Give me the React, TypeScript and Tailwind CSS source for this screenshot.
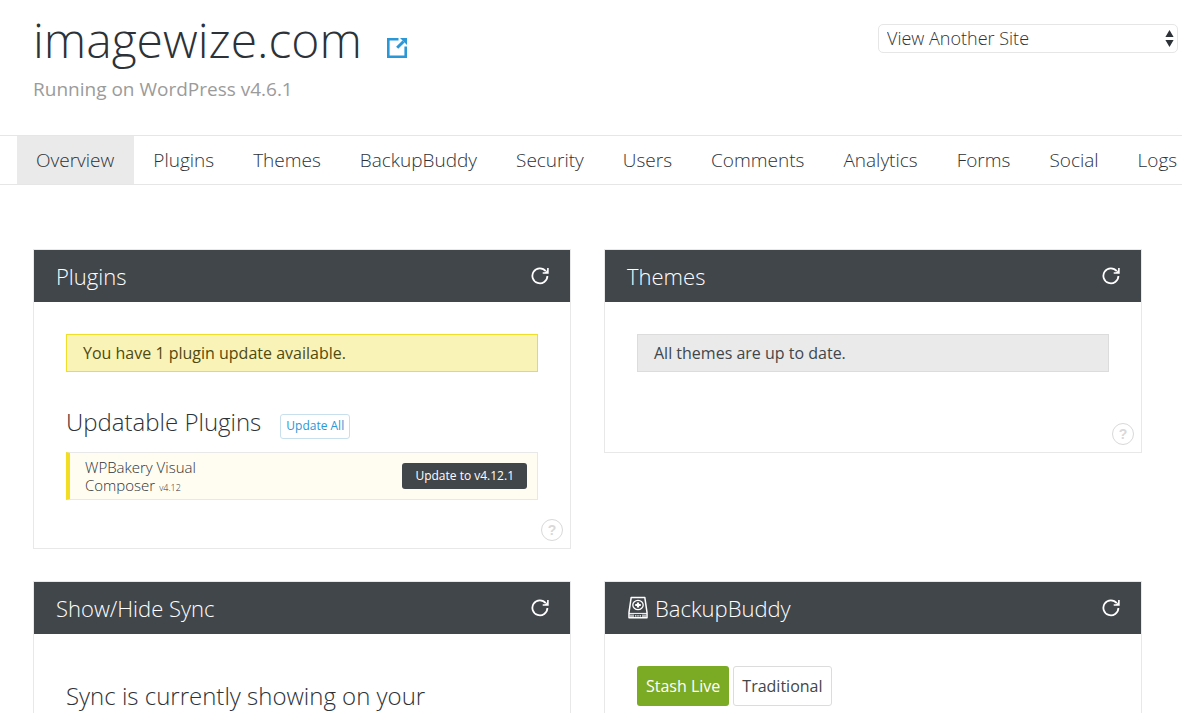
import type { ReactNode } from 'react';

const tabs = [
    'Overview',
    'Plugins',
    'Themes',
    'BackupBuddy',
    'Security',
    'Users',
    'Comments',
    'Analytics',
    'Forms',
    'Social',
    'Logs',
];

function RefreshIcon() {
    return (
        <svg width="18" height="18" viewBox="0 0 18 18" fill="none" stroke="currentColor" strokeWidth="1.8">
            <path d="M14.8 4.2A7.5 7.5 0 1 0 16.4 9" />
            <path d="M16.9 1v5h-5.2" strokeWidth="1.6" />
            <path d="M17 2.5V6h-3.5z" fill="currentColor" stroke="none" />
        </svg>
    );
}

function ExternalIcon() {
    return (
        <svg width="20" height="20" viewBox="0 0 20 20" fill="none" stroke="currentColor">
            <path d="M11.5 1.3H1.3v17.4h17.4V8.5" strokeWidth="2.6" />
            <path d="M10.2 9.8l6.3-6.3" strokeWidth="3" />
            <path d="M13 0h7v7z" fill="currentColor" stroke="none" />
        </svg>
    );
}

function DriveIcon() {
    return (
        <svg width="20" height="24" viewBox="0 0 20 24" fill="none" stroke="currentColor">
            <path d="M3.2 1.4h13.6L19 16.4v5.4H1v-5.4z" strokeWidth="1.5" strokeLinejoin="round" />
            <path d="M1 17.4h18" strokeWidth="1" />
            <path d="M2 19.9h4M14 19.9h4" strokeWidth="3" opacity="0.6" />
            <path d="M7 19.9h6" strokeWidth="1.4" strokeDasharray="1.4 0.9" />
            <ellipse cx="10" cy="9" rx="5.2" ry="4.6" strokeWidth="1.3" />
            <path d="M10 6.4v5.2M7.2 9h5.6" strokeWidth="2.2" />
        </svg>
    );
}

type PanelProps = {
    title: string;
    icon?: ReactNode;
    help?: boolean;
    children: ReactNode;
};

function Panel({ title, icon, help, children }: PanelProps) {
    return (
        <section className="border border-[#e8e8e8] bg-white">
            <header className="flex h-[52px] items-center justify-between bg-[#41464b] pr-[21px] pl-[22px] text-white">
                <div className="flex items-center">
                    {icon && <span className="pr-[7px] pl-px">{icon}</span>}
                    <h2 className="text-[22px] leading-[52px] font-light">{title}</h2>
                </div>
                <button type="button" aria-label={`Refresh ${title}`}>
                    <RefreshIcon />
                </button>
            </header>
            <div className="px-8 pt-8">{children}</div>
            {help && (
                <footer className="flex justify-end pt-[19px] pr-[7px] pb-[7px]">
                    <button
                        type="button"
                        aria-label={`Help for ${title}`}
                        className="h-[22px] w-[22px] rounded-full border border-[#d9d9d9] font-['Liberation_Sans',sans-serif] text-sm leading-5 font-bold text-[#d9d9d9]"
                    >
                        ?
                    </button>
                </footer>
            )}
        </section>
    );
}

function App() {
    return (
        <div className="h-screen overflow-hidden bg-white font-['Open_Sans',sans-serif] text-[#2d3238]">
            <header className="flex h-[135px] items-start justify-between pr-1 pl-[33px]">
                <div>
                    <div className="flex items-center gap-[25px]">
                        <h1 className="text-5xl leading-[79px] font-light">imagewize.com</h1>
                        <a href="#site" aria-label="Open site" className="mt-4 text-[#2a97d6]">
                            <ExternalIcon />
                        </a>
                    </div>
                    <p className="text-[19px] leading-5 text-[#9b9b9b]">Running on WordPress v4.6.1</p>
                </div>
                <div className="relative mt-6 w-[300px]">
                    <select
                        aria-label="View another site"
                        className="h-[29px] w-full appearance-none rounded-[5px] border border-[#e6e6e6] bg-white px-2 text-lg leading-[27px] font-light"
                    >
                        <option>View Another Site</option>
                    </select>
                    <svg
                        width="9"
                        height="17"
                        viewBox="0 0 9 17"
                        fill="currentColor"
                        className="pointer-events-none absolute top-1.5 right-1"
                    >
                        <path d="M4.5 0L8.6 7H.4zM4.5 17L.4 10h8.2z" />
                    </svg>
                </div>
            </header>

            <nav className="flex h-[50px] overflow-hidden border-y border-[#e6e6e6] pl-[17px]">
                {tabs.map((tab, i) => (
                    <a
                        key={tab}
                        href={`#${tab.toLowerCase()}`}
                        className={
                            i === 0
                                ? 'bg-[#eaeaea] pr-5 pl-[19px] text-[19px] leading-[48px] font-light whitespace-nowrap'
                                : 'pr-5 pl-[19px] text-[19px] leading-[48px] font-light whitespace-nowrap'
                        }
                    >
                        {tab}
                    </a>
                ))}
            </nav>

            <main className="grid grid-cols-2 items-start gap-x-[33px] gap-y-8 pt-16 pr-10 pl-[33px]">
                <Panel title="Plugins" help>
                    <p className="border border-[#f0de28] bg-[#faf3b8] px-4 text-base leading-9 text-[#4f4a10]">
                        You have 1 plugin update available.
                    </p>
                    <div className="mt-8 flex items-center gap-[19px]">
                        <h3 className="text-2xl leading-9 font-light">Updatable Plugins</h3>
                        <button
                            type="button"
                            className="mt-2 h-[25px] rounded-[3px] border border-[#c9dfee] px-[5px] text-xs text-[#2a97d6]"
                        >
                            Update All
                        </button>
                    </div>
                    <div className="mt-3 flex h-12 items-center justify-between border border-l-4 border-[#e8e8e8] border-l-[#f2dd22] bg-[#fffdf2] pr-2.5 pl-[15px]">
                        <div className="w-32 text-[15px] leading-[18px] font-light">
                            <div>WPBakery Visual</div>
                            <div className="flex items-baseline gap-1">
                                Composer <small className="text-[9px] leading-3">v4.12</small>
                            </div>
                        </div>
                        <button
                            type="button"
                            className="h-[26px] rounded-[3px] bg-[#41464b] px-[13px] text-xs text-white"
                        >
                            Update to v4.12.1
                        </button>
                    </div>
                </Panel>

                <Panel title="Themes" help>
                    <div className="pb-8">
                        <p className="border border-[#dcdcdc] bg-[#eaeaea] px-4 text-base leading-9 text-[#41464b]">
                            All themes are up to date.
                        </p>
                    </div>
                </Panel>

                <Panel title="Show/Hide Sync">
                    <h3 className="max-w-[400px] pt-3 pb-8 text-2xl leading-9 font-light">
                        Sync is currently showing on your
                    </h3>
                </Panel>

                <Panel title="BackupBuddy" icon={<DriveIcon />}>
                    <div className="flex gap-1 pb-16">
                        <button type="button" className="h-10 rounded-[3px] bg-[#7bab24] px-[9px] text-base text-white">
                            Stash Live
                        </button>
                        <button
                            type="button"
                            className="h-10 rounded-[3px] border border-[#dcdcdc] px-2 text-base text-[#41464b]"
                        >
                            Traditional
                        </button>
                    </div>
                </Panel>
            </main>
        </div>
    );
}

export default App;
